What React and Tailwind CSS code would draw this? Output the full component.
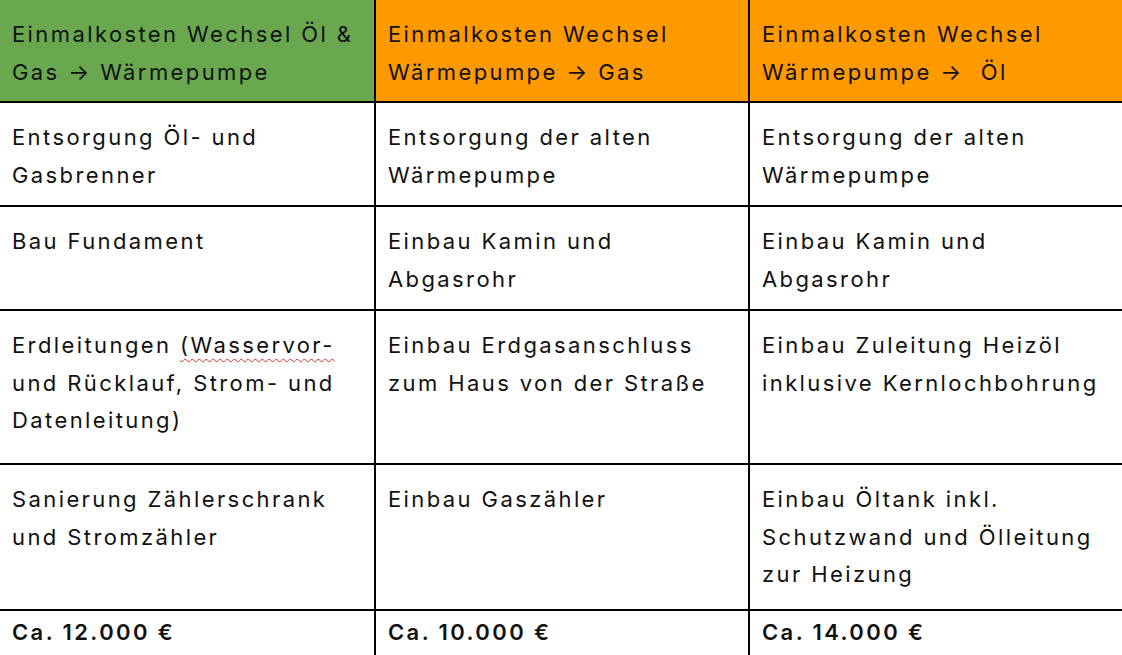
import React from "react";

const Wavy = ({ children }) => (
  <span className="underline decoration-wavy decoration-[#e03030] decoration-1 underline-offset-[5px]">{children}</span>
);

const rows = [
  {
    h: "h-[104px]",
    cells: [
      <>Entsorgung Öl- und<br />Gasbrenner</>,
      <>Entsorgung der alten<br />Wärmepumpe</>,
      <>Entsorgung der alten<br />Wärmepumpe</>,
    ],
  },
  {
    h: "h-[104px]",
    cells: [
      <>Bau Fundament</>,
      <>Einbau Kamin und<br />Abgasrohr</>,
      <>Einbau Kamin und<br />Abgasrohr</>,
    ],
  },
  {
    h: "h-[154px]",
    cells: [
      <>Erdleitungen <Wavy>(Wasservor-</Wavy><br />und Rücklauf, Strom- und<br />Datenleitung)</>,
      <>Einbau Erdgasanschluss<br />zum Haus von der Straße</>,
      <>Einbau Zuleitung Heizöl<br />inklusive Kernlochbohrung</>,
    ],
  },
  {
    h: "h-[146px]",
    cells: [
      <>Sanierung Zählerschrank<br />und Stromzähler</>,
      <>Einbau Gaszähler</>,
      <>Einbau Öltank inkl.<br />Schutzwand und Ölleitung<br />zur Heizung</>,
    ],
  },
];

const cellBase = "align-top pl-3 pr-2 pt-4 pb-[10px] whitespace-nowrap";
const lastBase = "align-top pl-3 pr-2 pt-[3px] pb-[10px] whitespace-nowrap font-semibold";

export default function App() {
  return (
    <div className="w-[1122px] h-[655px] overflow-hidden bg-white text-[#111] font-['Inter','Noto_Sans',sans-serif]">
      <table className="w-[1122px] border-collapse table-fixed text-[22px] leading-[37.5px] tracking-[2.4px]">
        <colgroup>
          <col className="w-[375px]" />
          <col className="w-[374px]" />
          <col className="w-[373px]" />
        </colgroup>
        <thead>
          <tr className="h-[101px]">
            <th className={cellBase + " bg-[#6aa84f] text-left font-normal border-r-2 border-b-2 border-black"}>
              Einmalkosten Wechsel Öl &amp;<br />Gas → Wärmepumpe
            </th>
            <th className={cellBase + " bg-[#ff9900] text-left font-normal border-r-2 border-b-2 border-black"}>
              Einmalkosten Wechsel<br />Wärmepumpe → Gas
            </th>
            <th className={cellBase + " bg-[#ff9900] text-left font-normal border-b-2 border-black"}>
              Einmalkosten Wechsel<br />Wärmepumpe →&nbsp; Öl
            </th>
          </tr>
        </thead>
        <tbody>
          {rows.map((r, i) => (
            <tr key={i} className={r.h}>
              {r.cells.map((c, j) => (
                <td
                  key={j}
                  className={cellBase + " border-b-2 border-black " + (j < 2 ? "border-r-2" : "")}
                >
                  {c}
                </td>
              ))}
            </tr>
          ))}
          <tr>
            <td className={lastBase + " border-r-2 border-black"}>Ca. 12.000 €</td>
            <td className={lastBase + " border-r-2 border-black"}>Ca. 10.000 €</td>
            <td className={lastBase}>Ca. 14.000 €</td>
          </tr>
        </tbody>
      </table>
    </div>
  );
}
